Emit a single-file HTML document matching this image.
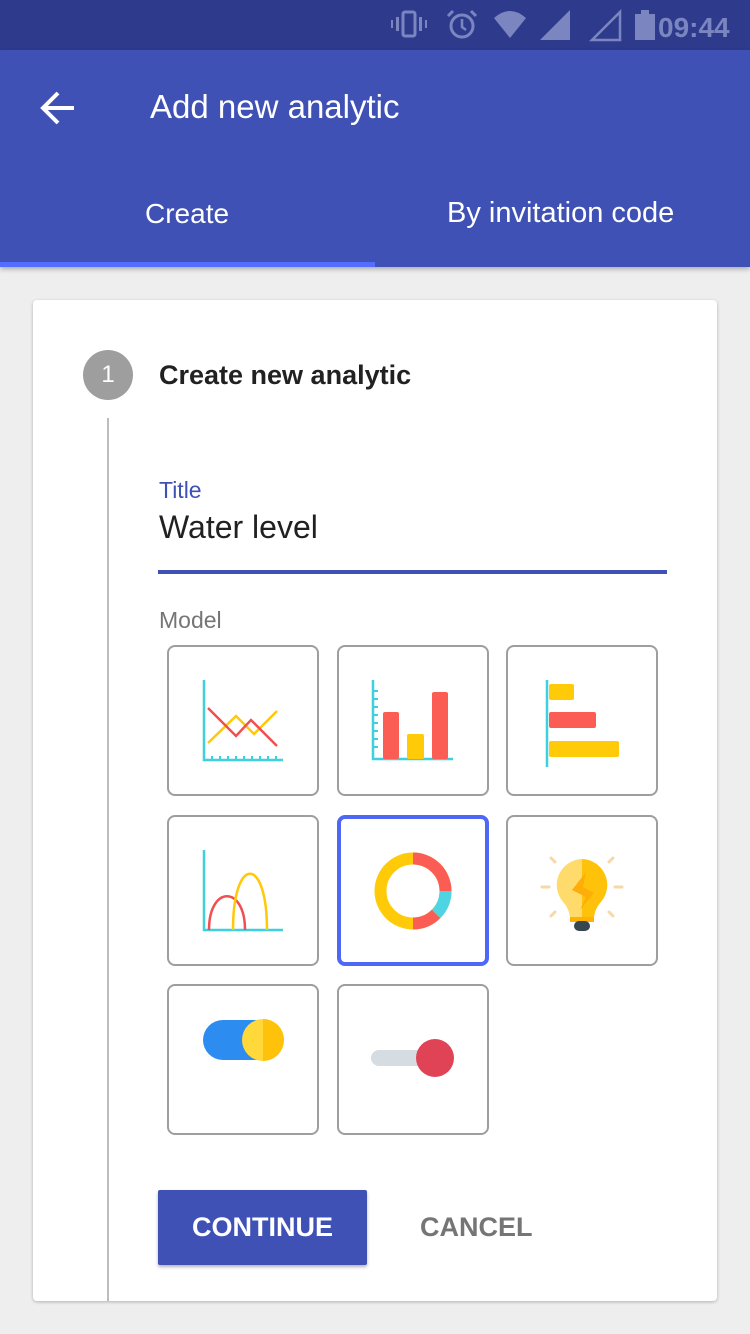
<!DOCTYPE html>
<html><head><meta charset="utf-8"><style>
*{margin:0;padding:0;box-sizing:border-box}
body{width:750px;height:1334px;background:#eeeeee;font-family:"Liberation Sans",Roboto,sans-serif;position:relative;overflow:hidden}
.sb{position:absolute;left:0;top:0;width:750px;height:50px;background:#2e3b8c}
.ab{position:absolute;left:0;top:50px;width:750px;height:217px;background:#3f51b5;box-shadow:0 2px 5px rgba(0,0,0,.3)}
.t{position:absolute;color:#fff}
.card{position:absolute;left:33px;top:300px;width:684px;height:1001px;background:#fff;border-radius:4px;box-shadow:0 1px 3px rgba(0,0,0,.25)}
.tile{position:absolute;width:152px;height:151px;border:2px solid #9e9e9e;border-radius:8px;background:#fff}
.tile svg{position:absolute;left:-2px;top:-2px}
</style></head><body>
<div class="sb">
<svg width="750" height="50" style="position:absolute;left:0;top:0">
<g fill="#7b86c0">
<rect x="403" y="12" width="12" height="24" rx="2" fill="none" stroke="#7b86c0" stroke-width="3"/>
<rect x="396" y="17" width="3" height="14"/><rect x="419" y="17" width="3" height="14"/>
<rect x="391" y="20" width="2" height="8"/><rect x="425" y="20" width="2" height="8"/>
<circle cx="462" cy="26" r="11" fill="none" stroke="#7b86c0" stroke-width="3"/>
<path d="M462 19v8l4 3" stroke="#7b86c0" stroke-width="2.5" fill="none"/>
<path d="M448 16l5-5M476 16l-5-5" stroke="#7b86c0" stroke-width="3"/>
<path d="M494 18 Q510 4 526 18 L510 38Z"/>
<path d="M540 40 L570 10 L570 40Z"/>
<path d="M592 40 L620 12 L620 40Z" fill="none" stroke="#7b86c0" stroke-width="2.5"/>
<rect x="635" y="14" width="20" height="26"/><rect x="641" y="10" width="8" height="5"/>
</g>
<text x="658" y="37" font-family="Liberation Sans" font-weight="bold" font-size="28" fill="#7b86c0">09:44</text>
</svg>
</div>
<div class="ab">
<svg width="40" height="40" style="position:absolute;left:38px;top:38px"><path d="M36 20H6M20 5L5 20l15 15" stroke="#fff" stroke-width="4" fill="none"/></svg>
<div class="t" style="left:150px;top:38px;font-size:33px">Add new analytic</div>
<div class="t" style="left:145px;top:148px;font-size:28px">Create</div>
<div class="t" style="left:447px;top:147px;font-size:29px">By invitation code</div>
<div style="position:absolute;left:0;top:212px;width:375px;height:5px;background:#536dfe"></div>
</div>
<div class="card">
<div style="position:absolute;left:50px;top:50px;width:50px;height:50px;border-radius:50%;background:#9e9e9e;color:#fff;font-size:24px;text-align:center;line-height:50px">1</div>
<div style="position:absolute;left:126px;top:60px;font-size:27px;font-weight:bold;color:#212121">Create new analytic</div>
<div style="position:absolute;left:74px;top:118px;width:2px;height:883px;background:#bdbdbd"></div>
<div style="position:absolute;left:126px;top:177px;font-size:23px;color:#3f51b5">Title</div>
<div style="position:absolute;left:126px;top:209px;font-size:32px;color:#212121">Water level</div>
<div style="position:absolute;left:125px;top:270px;width:509px;height:4px;background:#3f51b5"></div>
<div style="position:absolute;left:126px;top:307px;font-size:23px;color:#757575">Model</div>
<div style="position:absolute;left:125px;top:890px;width:209px;height:75px;background:#3f51b5;border-radius:2px;box-shadow:0 2px 3px rgba(0,0,0,.3);color:#fff;font-weight:bold;font-size:27px;text-align:center;line-height:75px">CONTINUE</div>
<div style="position:absolute;left:387px;top:890px;height:75px;line-height:75px;color:#757575;font-weight:bold;font-size:27px">CANCEL</div>
</div>

<div class="tile" style="left:167px;top:645px"><svg width="152" height="151">
<path d="M37 35V115H116" stroke="#3fd0e0" stroke-width="2.5" fill="none"/>
<path d="M45 111v4M53 111v4M61 111v4M69 111v4M77 111v4M85 111v4M93 111v4M101 111v4M109 111v4" stroke="#3fd0e0" stroke-width="2"/>
<path d="M41 98L69 71L87 89L110 66" stroke="#ffc90a" stroke-width="2.5" fill="none"/>
<path d="M41 63L69 91L84 75L110 101" stroke="#f05050" stroke-width="2.5" fill="none"/>
</svg></div>
<div class="tile" style="left:337px;top:645px"><svg width="152" height="151">
<path d="M36 35V114H116" stroke="#3fd0e0" stroke-width="2.5" fill="none"/>
<path d="M36 46h5M36 54h5M36 62h5M36 70h5M36 78h5M36 86h5M36 94h5M36 102h5" stroke="#3fd0e0" stroke-width="2"/>
<rect x="46" y="67" width="16" height="47" rx="2" fill="#fb5d55"/>
<rect x="70" y="89" width="17" height="25" rx="2" fill="#ffca08"/>
<rect x="95" y="47" width="16" height="67" rx="2" fill="#fb5d55"/>
</svg></div>
<div class="tile" style="left:506px;top:645px"><svg width="152" height="151">
<path d="M41 35V122" stroke="#3fd0e0" stroke-width="2.5"/>
<rect x="43" y="39" width="25" height="16" rx="2" fill="#ffca08"/>
<rect x="43" y="67" width="47" height="16" rx="2" fill="#fb5d55"/>
<rect x="43" y="96" width="70" height="16" rx="2" fill="#ffca08"/>
</svg></div>

<div class="tile" style="left:167px;top:815px"><svg width="152" height="151">
<path d="M37 35V115H116" stroke="#3fd0e0" stroke-width="2.5" fill="none"/>
<path d="M42 115 C42 70 78 70 78 115" stroke="#f05050" stroke-width="2.5" fill="none"/>
<path d="M66 115 C66 40 100 40 100 115" stroke="#ffc90a" stroke-width="2.5" fill="none"/>
</svg></div>
<div class="tile" style="left:337px;top:815px;border:4px solid #4f67f5"><svg width="152" height="151" style="left:-4px;top:-4px">
<circle cx="76" cy="76" r="32.5" fill="none" stroke="#ffca08" stroke-width="12"/>
<path d="M76 43.5 A32.5 32.5 0 0 1 108.5 76" fill="none" stroke="#fb5d55" stroke-width="12"/>
<path d="M108.5 76 A32.5 32.5 0 0 1 99 99" fill="none" stroke="#4fd4e4" stroke-width="12"/>
<path d="M99 99 A32.5 32.5 0 0 1 76 108.5" fill="none" stroke="#fb5d55" stroke-width="12"/>
</svg></div>
<div class="tile" style="left:506px;top:815px"><svg width="152" height="151">
<path d="M76 44 A26 26 0 0 0 58 88 Q63 94 64 102 H76Z" fill="#ffdb6b"/>
<path d="M76 44 A26 26 0 0 1 94 88 Q89 94 88 102 H76Z" fill="#ffc20a"/>
<rect x="64" y="102" width="24" height="5" fill="#ffb300"/>
<rect x="68" y="106" width="16" height="10" rx="5" fill="#37474f"/>
<path d="M80 57 L66 75 L80 82 L74 95 L88 78 L77 72Z" fill="#ffad08"/>
<g stroke="#f8d7a8" stroke-width="3" stroke-linecap="round"><path d="M36 72h7M109 72h7M45 43l4 4M107 43l-4 4M45 101l4-4M107 101l-4-4"/></g>
</svg></div>

<div class="tile" style="left:167px;top:984px"><svg width="152" height="151">
<rect x="36" y="36" width="80" height="40" rx="20" fill="#2d8cf0"/>
<circle cx="96" cy="56" r="21" fill="#ffd83a"/>
<path d="M96 35 A21 21 0 0 1 96 77Z" fill="#ffc20a"/>
</svg></div>
<div class="tile" style="left:337px;top:984px"><svg width="152" height="151">
<rect x="34" y="66" width="70" height="16" rx="8" fill="#d5dce2"/>
<circle cx="98" cy="74" r="19" fill="#e04256"/>
</svg></div>
</body></html>
